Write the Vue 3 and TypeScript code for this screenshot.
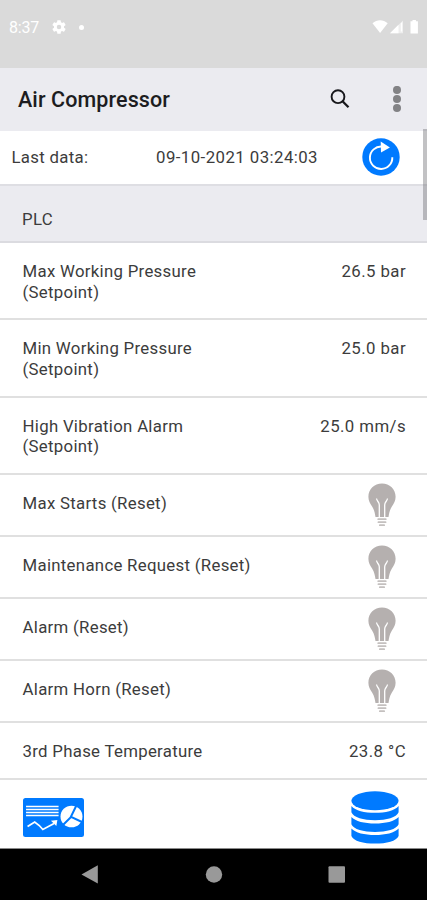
<script setup lang="ts">
interface Row {
  label: string
  note?: string
  value?: string
}

const rows: Row[] = [
  { label: 'Max Working Pressure', note: '(Setpoint)', value: '26.5 bar' },
  { label: 'Min Working Pressure', note: '(Setpoint)', value: '25.0 bar' },
  { label: 'High Vibration Alarm', note: '(Setpoint)', value: '25.0 mm/s' },
  { label: 'Max Starts (Reset)' },
  { label: 'Maintenance Request (Reset)' },
  { label: 'Alarm (Reset)' },
  { label: 'Alarm Horn (Reset)' },
  { label: '3rd Phase Temperature', value: '23.8 °C' },
]
</script>

<template>
  <div class="screen">
    <div class="status">
      <span class="clock">8:37</span>
      <svg class="gear" width="14" height="14" viewBox="2 2 20 20">
        <path fill="#fff" d="M19.14 12.94c.04-.3.06-.61.06-.94 0-.32-.02-.64-.07-.94l2.03-1.58a.49.49 0 0 0 .12-.61l-1.92-3.32a.49.49 0 0 0-.59-.22l-2.39.96c-.5-.38-1.03-.7-1.62-.94l-.36-2.54a.48.48 0 0 0-.48-.41h-3.84c-.24 0-.43.17-.47.41l-.36 2.54c-.59.24-1.13.57-1.62.94l-2.39-.96a.48.48 0 0 0-.59.22L2.74 8.87c-.12.21-.08.47.12.61l2.03 1.58c-.05.3-.09.63-.09.94s.02.64.07.94l-2.03 1.58a.49.49 0 0 0-.12.61l1.92 3.32c.12.22.37.29.59.22l2.39-.96c.5.38 1.03.7 1.62.94l.36 2.54c.05.24.24.41.48.41h3.84c.24 0 .44-.17.47-.41l.36-2.54c.59-.24 1.13-.56 1.62-.94l2.39.96c.22.08.47 0 .59-.22l1.92-3.32a.49.49 0 0 0-.12-.61l-2.01-1.58zM12 15.2a3.2 3.2 0 1 1 0-6.400 3.200 3.200 0 0 1 0 6.400z" />
      </svg>
      <span class="dot"></span>
      <svg class="signals" width="50" height="16" viewBox="0 0 50 16">
        <path fill="#fff" d="M.5 4.200C5 .300 11 .300 15.700 4.200L8.100 14z" />
        <path fill="#fff" fill-opacity=".55" d="M18 14.300L31 1.500v12.800z" />
        <path fill="#fff" d="M18 14.300l8.500-8.500v8.500zM28.800 4.500l1.400-1.400v9.400h-1.400z" />
        <path fill="#fff" d="M38.500 2.200h2V1h3.400v1.200h2v12.200h-7.400z" />
      </svg>
    </div>

    <header class="bar">
      <h1>Air Compressor</h1>
      <svg class="search" width="22" height="22" viewBox="0 0 22 22" fill="none" stroke="#17171b">
        <circle cx="9" cy="7.700" r="6.400" stroke-width="1.900" />
        <path d="M13.300 12l6.200 6.200" stroke-width="2.300" />
      </svg>
      <svg class="more" width="10" height="28" viewBox="0 0 10 28" fill="#828285">
        <circle cx="5" cy="3.900" r="4" />
        <circle cx="5" cy="13" r="4" />
        <circle cx="5" cy="22.100" r="4" />
      </svg>
    </header>

    <div class="last">
      <span>Last data:</span>
      <span class="stamp">09-10-2021 03:24:03</span>
      <svg class="refresh" width="38" height="38" viewBox="0 0 38 38">
        <circle cx="19" cy="19" r="18.700" fill="#007aff" />
        <path d="M30.300 19.200A11.200 11.200 0 1 1 20 8.600" fill="none" stroke="#fff" stroke-width="1.900" />
        <path d="M18.700 3.600l9.200 5.800-8.900 5z" fill="#fff" />
      </svg>
    </div>

    <main class="list">
      <h2>PLC</h2>
      <div v-for="row in rows" :key="row.label" class="row" :class="{ tall: row.note }">
        <div class="label">
          {{ row.label }}<template v-if="row.note"><br />{{ row.note }}</template>
        </div>
        <span v-if="row.value" class="value">{{ row.value }}</span>
        <svg v-else class="bulb" width="28" height="44" viewBox="0 0 28 44">
          <path fill="#b5b0af" d="M14 .5C6.300.500.400 6.300.400 13.700c0 4 1.700 6.600 3.700 9.800 2.400 3.900 2.800 7 3.400 10.500h13c.6-3.500 1-6.600 3.400-10.500 2-3.200 3.700-5.800 3.700-9.800C27.600 6.300 21.700.500 14 .500z" />
          <path fill="none" stroke="#fff" stroke-width="1.300" d="M8.500 15.500c.4 3 2.800 3.300 2.800 6.500v12M19.500 15.500c-.4 3-2.800 3.300-2.800 6.500v12" />
          <path fill="none" stroke="#c4c0bf" stroke-width="1.700" stroke-linecap="round" d="M10.200 36.200h7.600M10.400 39.200h7.200M11.800 42.200h4.400" />
        </svg>
      </div>
    </main>

    <footer class="tools">
      <svg width="61" height="39" viewBox="0 0 60 39" preserveAspectRatio="none">
        <rect width="60" height="39" rx="2.500" fill="#007aff" />
        <path stroke="#fff" stroke-width="1.500" d="M3 8.500h32M3 11.600h32M3 14.400h32M3 17.500h32" />
        <path fill="none" stroke="#fff" stroke-width="1.700" d="M4.500 28.500l7-4.500 4.500 3.500 3.500 4 11-6" />
        <path fill="#fff" d="M27.500 22.700l6.300-.7-1 6z" />
        <circle cx="47.700" cy="18.500" r="10.800" fill="#fff" />
        <path fill="none" stroke="#007aff" stroke-width="2" d="M53 6.500L46.800 19.500l-8 8M47.300 18.800L59 24.500" />
      </svg>
      <svg class="db" width="48" height="53" viewBox="0 0 48 53" fill="#007aff">
        <ellipse cx="24" cy="9.800" rx="23.600" ry="9.500" />
        <path d="M.400 15c4 4.700 13 6.800 23.600 6.800S43.600 19.700 47.600 15v6.200c-2 5.200-12 8-23.600 8S2.400 26.400.400 21.200z" />
        <path d="M.400 26c4 4.400 13 6.500 23.600 6.500S43.600 30.400 47.600 26v7.200c-2 5-12 7.700-23.600 7.700S2.400 38.200.400 33.200z" />
        <path d="M.400 37.500c4 4.400 13 6.500 23.600 6.500s19.600-2.100 23.600-6.500v7.400c-2 5-12 7.700-23.600 7.700S2.400 49.900.400 44.900z" />
      </svg>
    </footer>

    <nav class="nav">
      <svg width="427" height="51" viewBox="0 0 427 51" fill="#999">
        <path d="M81.500 25.500L97.800 16.300v18.200z" />
        <circle cx="214" cy="25.500" r="8.200" />
        <rect x="328.500" y="17.300" width="16.500" height="16.500" rx="1" />
      </svg>
    </nav>
    <div class="thumb"></div>
  </div>
</template>

<style>
body {
  margin: 0;
}
</style>

<style scoped>
.screen {
  position: relative;
  width: 427px;
  height: 900px;
  overflow: hidden;
  display: flex;
  flex-direction: column;
  background: #fff;
  color: #3c3c3c;
  font: 400 16.8px/20.5px Roboto, sans-serif;
  letter-spacing: 0.3px;
}
.status {
  flex: none;
  box-sizing: border-box;
  height: 68px;
  padding: 19px 9px 0;
  display: flex;
  align-items: flex-start;
  background: #dadada;
}
.clock {
  width: 30px;
  color: #fff;
  font-size: 16px;
  line-height: 18px;
  letter-spacing: -0.2px;
}
.gear {
  margin: 1px 0 0 13px;
}
.dot {
  width: 5px;
  height: 5px;
  margin: 6px 0 0 13px;
  border-radius: 50%;
  background: #fff;
}
.signals {
  margin-left: auto;
  margin-right: -4px;
}
.bar {
  flex: none;
  height: 63px;
  padding: 0 25px 0 18px;
  display: flex;
  align-items: center;
  background: #ebebf0;
}
h1 {
  margin: 0;
  padding-top: 2px;
  flex: 1;
  color: #1c1c20;
  font-size: 21.5px;
  font-weight: 500;
  letter-spacing: 0.1px;
}
.search {
  margin-right: 41px;
}
.last {
  flex: none;
  box-sizing: border-box;
  height: 55px;
  padding: 0 27px 0 11.500px;
  display: flex;
  align-items: center;
  border-bottom: 2px solid #dedee3;
}
.stamp {
  margin-left: auto;
  letter-spacing: 0.44px;
}
.refresh {
  margin: -2px 0 0 44px;
}
.list {
  flex: 1;
  min-height: 0;
  overflow: hidden;
}
h2 {
  margin: 0;
  box-sizing: border-box;
  height: 57px;
  padding: 23px 22px 0;
  border-bottom: 2px solid #dbdbe0;
  background: #ebebf0;
  font-size: 16.8px;
  font-weight: 400;
}
.row {
  box-sizing: border-box;
  height: 62px;
  padding: 18px 21px 0 22.500px;
  display: flex;
  justify-content: space-between;
  border-bottom: 2px solid #e0e0e0;
}
.tall {
  height: 77.300px;
}
.value {
  letter-spacing: 0.42px;
}
.row:last-child {
  height: 57px;
}
.bulb {
  margin: -9.500px 10px 0 0;
}
.tools {
  flex: none;
  box-sizing: border-box;
  height: 69px;
  padding: 6px 28px 0 23px;
  display: flex;
  justify-content: space-between;
  align-items: center;
}
.nav {
  flex: none;
  box-sizing: border-box;
  height: 52px;
  margin-top: -1px;
  border-top: 1px solid #8a8a8a;
  background: #000;
}
.nav svg {
  display: block;
}
.thumb {
  position: absolute;
  top: 129px;
  right: 0;
  width: 4px;
  height: 91px;
  background: rgba(120, 120, 124, 0.45);
}
</style>
